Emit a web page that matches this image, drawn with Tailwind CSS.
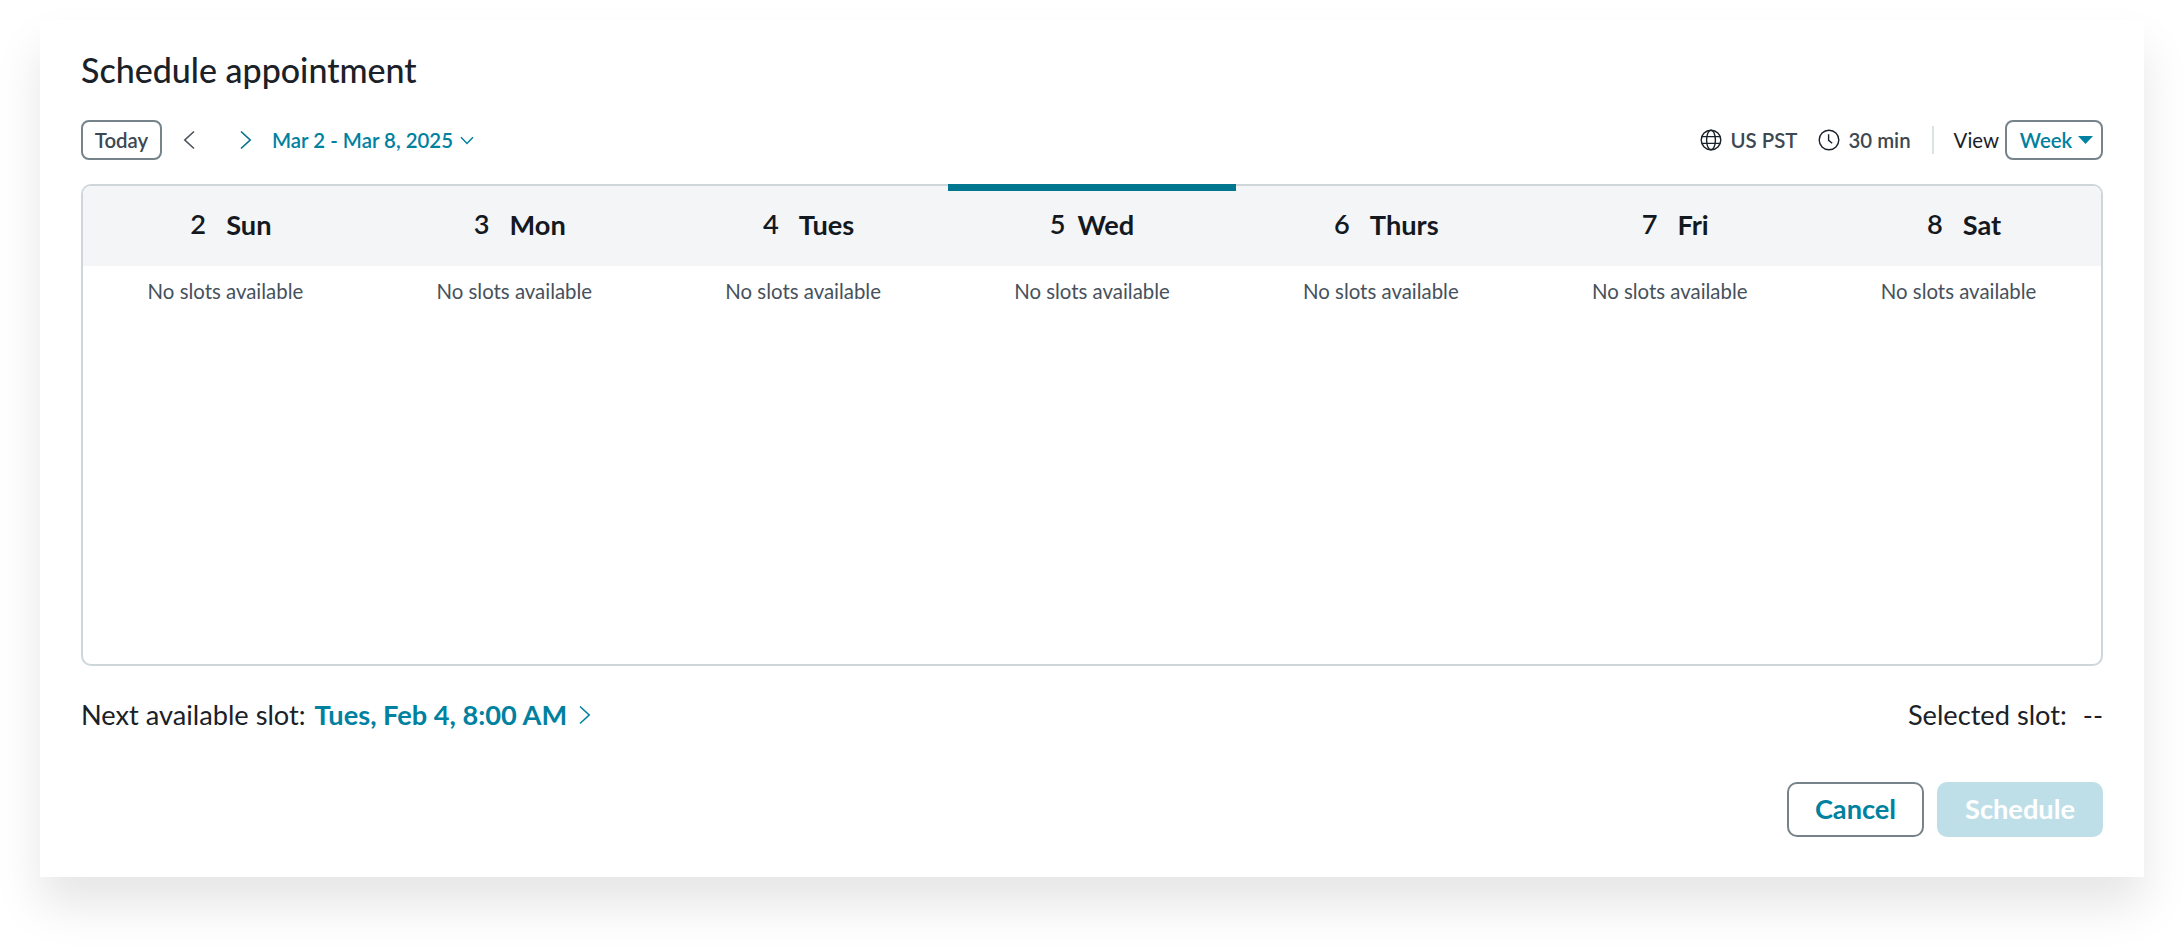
<!DOCTYPE html>
<html lang="en">
  <head>
    <meta charset="UTF-8" />
    <title>Schedule appointment</title>
    <script src="https://cdn.jsdelivr.net/npm/@tailwindcss/browser@4"></script>
  </head>
  <body class="bg-white font-['Lato',sans-serif] text-[#1a2129]">
    <div class="h-[950px] px-10 pt-5 overflow-hidden">
      <div class="bg-white px-[41px] pt-[29px] pb-10 shadow-[0_28px_44px_rgba(0,0,0,0.1)]">
        <h1 class="h-[42px] leading-[42px] text-[34px] font-medium">Schedule appointment</h1>

        <!-- toolbar -->
        <div class="mt-[29px] h-10 flex items-center justify-between">
          <div class="flex items-center">
            <button class="h-10 w-[81px] rounded-lg border-2 border-[#76838b] text-[20.4px] font-semibold text-[#3d4852]">Today</button>
            <svg class="ml-[21px] w-3 h-5" viewBox="0 0 12 20" fill="none" stroke="#46535c" stroke-width="1.6"><path d="M11 1.5 1.8 10l9.2 8.5" /></svg>
            <svg class="ml-[45px] w-3 h-5" viewBox="0 0 12 20" fill="none" stroke="#006f8c" stroke-width="1.6"><path d="M1 1.5 10.2 10 1 18.5" /></svg>
            <span class="ml-[20px] text-[20.4px] font-semibold text-[#00819f]">Mar 2 - Mar 8, 2025</span>
            <svg class="ml-[7px] w-[14px] h-[9px]" viewBox="0 0 14 9" fill="none" stroke="#00819f" stroke-width="1.5"><path d="M1 1.2 7 7.5l6-6.3" /></svg>
          </div>
          <div class="flex items-center text-[20.4px]">
            <svg class="w-[22px] h-[22px]" viewBox="0 0 22 22" fill="none" stroke="#1a2129" stroke-width="1.4">
              <circle cx="11" cy="11" r="9.8" />
              <ellipse cx="11" cy="11" rx="4.4" ry="9.8" />
              <path d="M1.8 7.6h18.4M1.8 14.4h18.4" />
            </svg>
            <span class="ml-2 font-semibold text-[#3d4852]">US PST</span>
            <svg class="ml-[21px] w-[22px] h-[22px]" viewBox="0 0 22 22" fill="none" stroke="#1a2129" stroke-width="1.4">
              <circle cx="11" cy="11" r="9.8" />
              <path d="M10.6 5.2v6.2l3.6 2.8" />
            </svg>
            <span class="ml-2 font-semibold text-[#3d4852]">30 min</span>
            <div class="ml-[21px] w-0.5 h-7 bg-[#dde2e5]"></div>
            <span class="ml-5 text-[#1a2129]">View</span>
            <button class="ml-1.5 h-10 w-[98px] pl-[5px] rounded-lg border-2 border-[#76838b] flex items-center justify-center gap-1.5 font-semibold text-[#00819f]">
              Week
              <svg class="w-[15px] h-2" viewBox="0 0 15 8" fill="#00819f"><path d="M0 0h15L7.5 8z" /></svg>
            </button>
          </div>
        </div>

        <!-- week grid -->
        <div class="mt-6 h-[482px] rounded-[10px] border-2 border-[#cfd6da]">
          <div class="h-[80px] rounded-t-lg bg-[#f3f5f7]">
            <div class="-mx-0.5 h-full grid grid-cols-7 text-[27.2px] font-bold text-[#14191f]">
              <div class="flex items-center justify-center gap-5 pl-[11px] pb-0.5"><span class="font-semibold -mt-0.5">2</span><span>Sun</span></div>
              <div class="flex items-center justify-center gap-5 pl-[11px] pb-0.5"><span class="font-semibold -mt-0.5">3</span><span>Mon</span></div>
              <div class="flex items-center justify-center gap-5 pl-[11px] pb-0.5"><span class="font-semibold -mt-0.5">4</span><span>Tues</span></div>
              <div class="flex items-center justify-center gap-3 border-t-[7px] border-[#00778f] -mt-0.5 pb-[7px]"><span class="font-semibold -mt-0.5">5</span><span>Wed</span></div>
              <div class="flex items-center justify-center gap-5 pl-[11px] pb-0.5"><span class="font-semibold -mt-0.5">6</span><span>Thurs</span></div>
              <div class="flex items-center justify-center gap-5 pl-[11px] pb-0.5"><span class="font-semibold -mt-0.5">7</span><span>Fri</span></div>
              <div class="flex items-center justify-center gap-5 pl-[11px] pb-0.5"><span class="font-semibold -mt-0.5">8</span><span>Sat</span></div>
            </div>
          </div>
          <div class="-mx-0.5 grid grid-cols-7 pt-2.5 text-center text-[20.4px] text-[#46515c]">
            <div>No slots available</div>
            <div>No slots available</div>
            <div>No slots available</div>
            <div>No slots available</div>
            <div>No slots available</div>
            <div>No slots available</div>
            <div>No slots available</div>
          </div>
        </div>

        <!-- slot summary -->
        <div class="mt-[31px] h-9 flex items-center justify-between text-[27.2px]">
          <div class="flex items-center">
            <span>Next available slot:</span>
            <span class="ml-[9px] font-bold text-[#00819f]">Tues, Feb 4, 8:00 AM</span>
            <svg class="ml-3 w-3 h-5" viewBox="0 0 12 20" fill="none" stroke="#00819f" stroke-width="1.6"><path d="M1 1.5 10.2 10 1 18.5" /></svg>
          </div>
          <div class="flex items-center gap-4">
            <span>Selected slot:</span>
            <span>--</span>
          </div>
        </div>

        <!-- actions -->
        <div class="mt-[49px] flex justify-end gap-[13px]">
          <button class="h-[55px] w-[137px] rounded-[10px] border-2 border-[#76838b] text-[27.2px] font-bold text-[#00819f]">Cancel</button>
          <button class="h-[55px] w-[166px] rounded-[10px] bg-[#bfdfe8] text-[27.2px] font-bold text-white">Schedule</button>
        </div>
      </div>
    </div>
  </body>
</html>
